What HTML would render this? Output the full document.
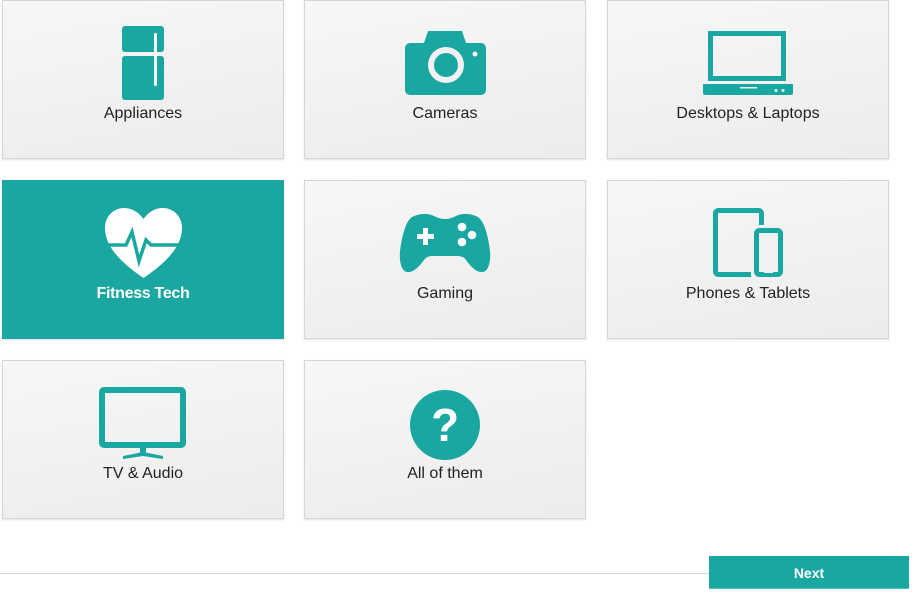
<!DOCTYPE html>
<html><head><meta charset="utf-8"><style>
body{margin:0;width:918px;height:598px;background:#fff;position:relative;overflow:hidden;font-family:"Liberation Sans",sans-serif}
.c{position:absolute;width:280px;height:157px;border:1px solid #d6d6d6;background:linear-gradient(170deg,#f7f7f7,#ececec);box-shadow:0 1px 2px rgba(0,0,0,.12)}
.c span{position:absolute;left:0;right:0;top:104px;text-align:center;font-size:16px;color:#222}
.sel{background:#1aa7a2;border-color:#1aa7a2}
.sel span{color:#fff;font-weight:bold;letter-spacing:-0.3px}
.line{position:absolute;left:0;top:573px;width:709px;height:1px;background:#d4d4d4}
.btn{position:absolute;left:709px;top:556px;width:200px;height:33px;background:#1aa7a2;color:#fff;font-weight:bold;font-size:14px;text-align:center;line-height:34px;border-bottom:1px solid #4fc0bb;box-sizing:border-box}
svg{position:absolute;left:0;top:0}
</style></head><body>
<div class="c" style="left:2px;top:0"><span>Appliances</span></div>
<div class="c" style="left:304px;top:0"><span>Cameras</span></div>
<div class="c" style="left:607px;top:0"><span>Desktops &amp; Laptops</span></div>
<div class="c sel" style="left:2px;top:180px"><span>Fitness Tech</span></div>
<div class="c" style="left:304px;top:180px"><span>Gaming</span></div>
<div class="c" style="left:607px;top:180px"><span>Phones &amp; Tablets</span></div>
<div class="c" style="left:2px;top:360px"><span>TV &amp; Audio</span></div>
<div class="c" style="left:304px;top:360px"><span>All of them</span></div>
<div class="line"></div>
<div class="btn">Next</div>
<svg width="918" height="598" viewBox="0 0 918 598">
<g fill="#1aa7a2">
<rect x="122" y="26" width="42" height="26" rx="3"/>
<rect x="122" y="56" width="42" height="44" rx="3"/>
<rect x="154" y="33" width="3" height="53" rx="1.5" fill="#fff"/>
<path d="M428 31h34l4 12h-42z"/>
<rect x="405" y="43" width="81" height="52" rx="5"/>
<circle cx="446" cy="65" r="18" fill="#f1f1f1"/>
<circle cx="446" cy="65" r="12"/>
<circle cx="475" cy="54" r="2.5" fill="#f1f1f1"/>
<rect x="710.5" y="33.5" width="73" height="45" fill="none" stroke="#1aa7a2" stroke-width="5"/>
<path d="M703 84h90v9q0 2-3 2h-84q-3 0-3-2z"/>
<rect x="740" y="87" width="17" height="1.5" fill="#f1f1f1"/>
<circle cx="776" cy="90.5" r="1.5" fill="#f1f1f1"/><circle cx="783" cy="90.5" r="1.5" fill="#f1f1f1"/>
<path d="M143.5 278C120 262 105 246 105 228c0-12 9-20 19-20 9 0 15 5 19.5 11 4.5-6 10.5-11 19.5-11 10 0 19 8 19 20 0 18-15 34-38.5 50z" fill="#fff"/>
<polyline points="103,245 126,245 132,232 139,261 146,240 151,245 184,245" fill="none" stroke="#1aa7a2" stroke-width="3.5" stroke-linejoin="miter"/>
<path d="M412 217c8-4 16-4 22-1 4 2 7 3 11 3s7-1 11-3c6-3 14-3 22 1 6 4 10 18 12 34 1 12-2 20-7 21-6 1-12-5-17-12-2-3-5-4-9-4h-24c-4 0-7 1-9 4-5 7-11 13-17 12-5-1-8-9-7-21 2-16 6-30 12-34z"/>
<path d="M423 228h5v6h6v5h-6v6h-5v-6h-6v-5h6z" fill="#fff"/>
<circle cx="462" cy="227" r="4.3" fill="#fff"/><circle cx="472" cy="235" r="4.3" fill="#fff"/><circle cx="462" cy="242" r="4.3" fill="#fff"/>
<rect x="715.5" y="210.5" width="46" height="64" rx="3" fill="none" stroke="#1aa7a2" stroke-width="5"/>
<rect x="751" y="225" width="35" height="55" rx="5" fill="#f1f1f1"/>
<rect x="756.5" y="230.5" width="24" height="44" rx="3" fill="none" stroke="#1aa7a2" stroke-width="5"/>
<rect x="733" y="270" width="9" height="2" fill="#f1f1f1"/>
<rect x="764" y="271" width="9" height="2" fill="#f1f1f1"/>
<rect x="102" y="390" width="81" height="55" rx="2" fill="none" stroke="#1aa7a2" stroke-width="6"/>
<rect x="140" y="447" width="6" height="6"/>
<path d="M123 456l20-4 20 4v3l-20-3-20 3z"/>
<circle cx="445" cy="425" r="35"/>
</g>
<text x="445" y="441" text-anchor="middle" font-family="Liberation Sans" font-weight="bold" font-size="46" fill="#fff">?</text>
</svg>
</body></html>
